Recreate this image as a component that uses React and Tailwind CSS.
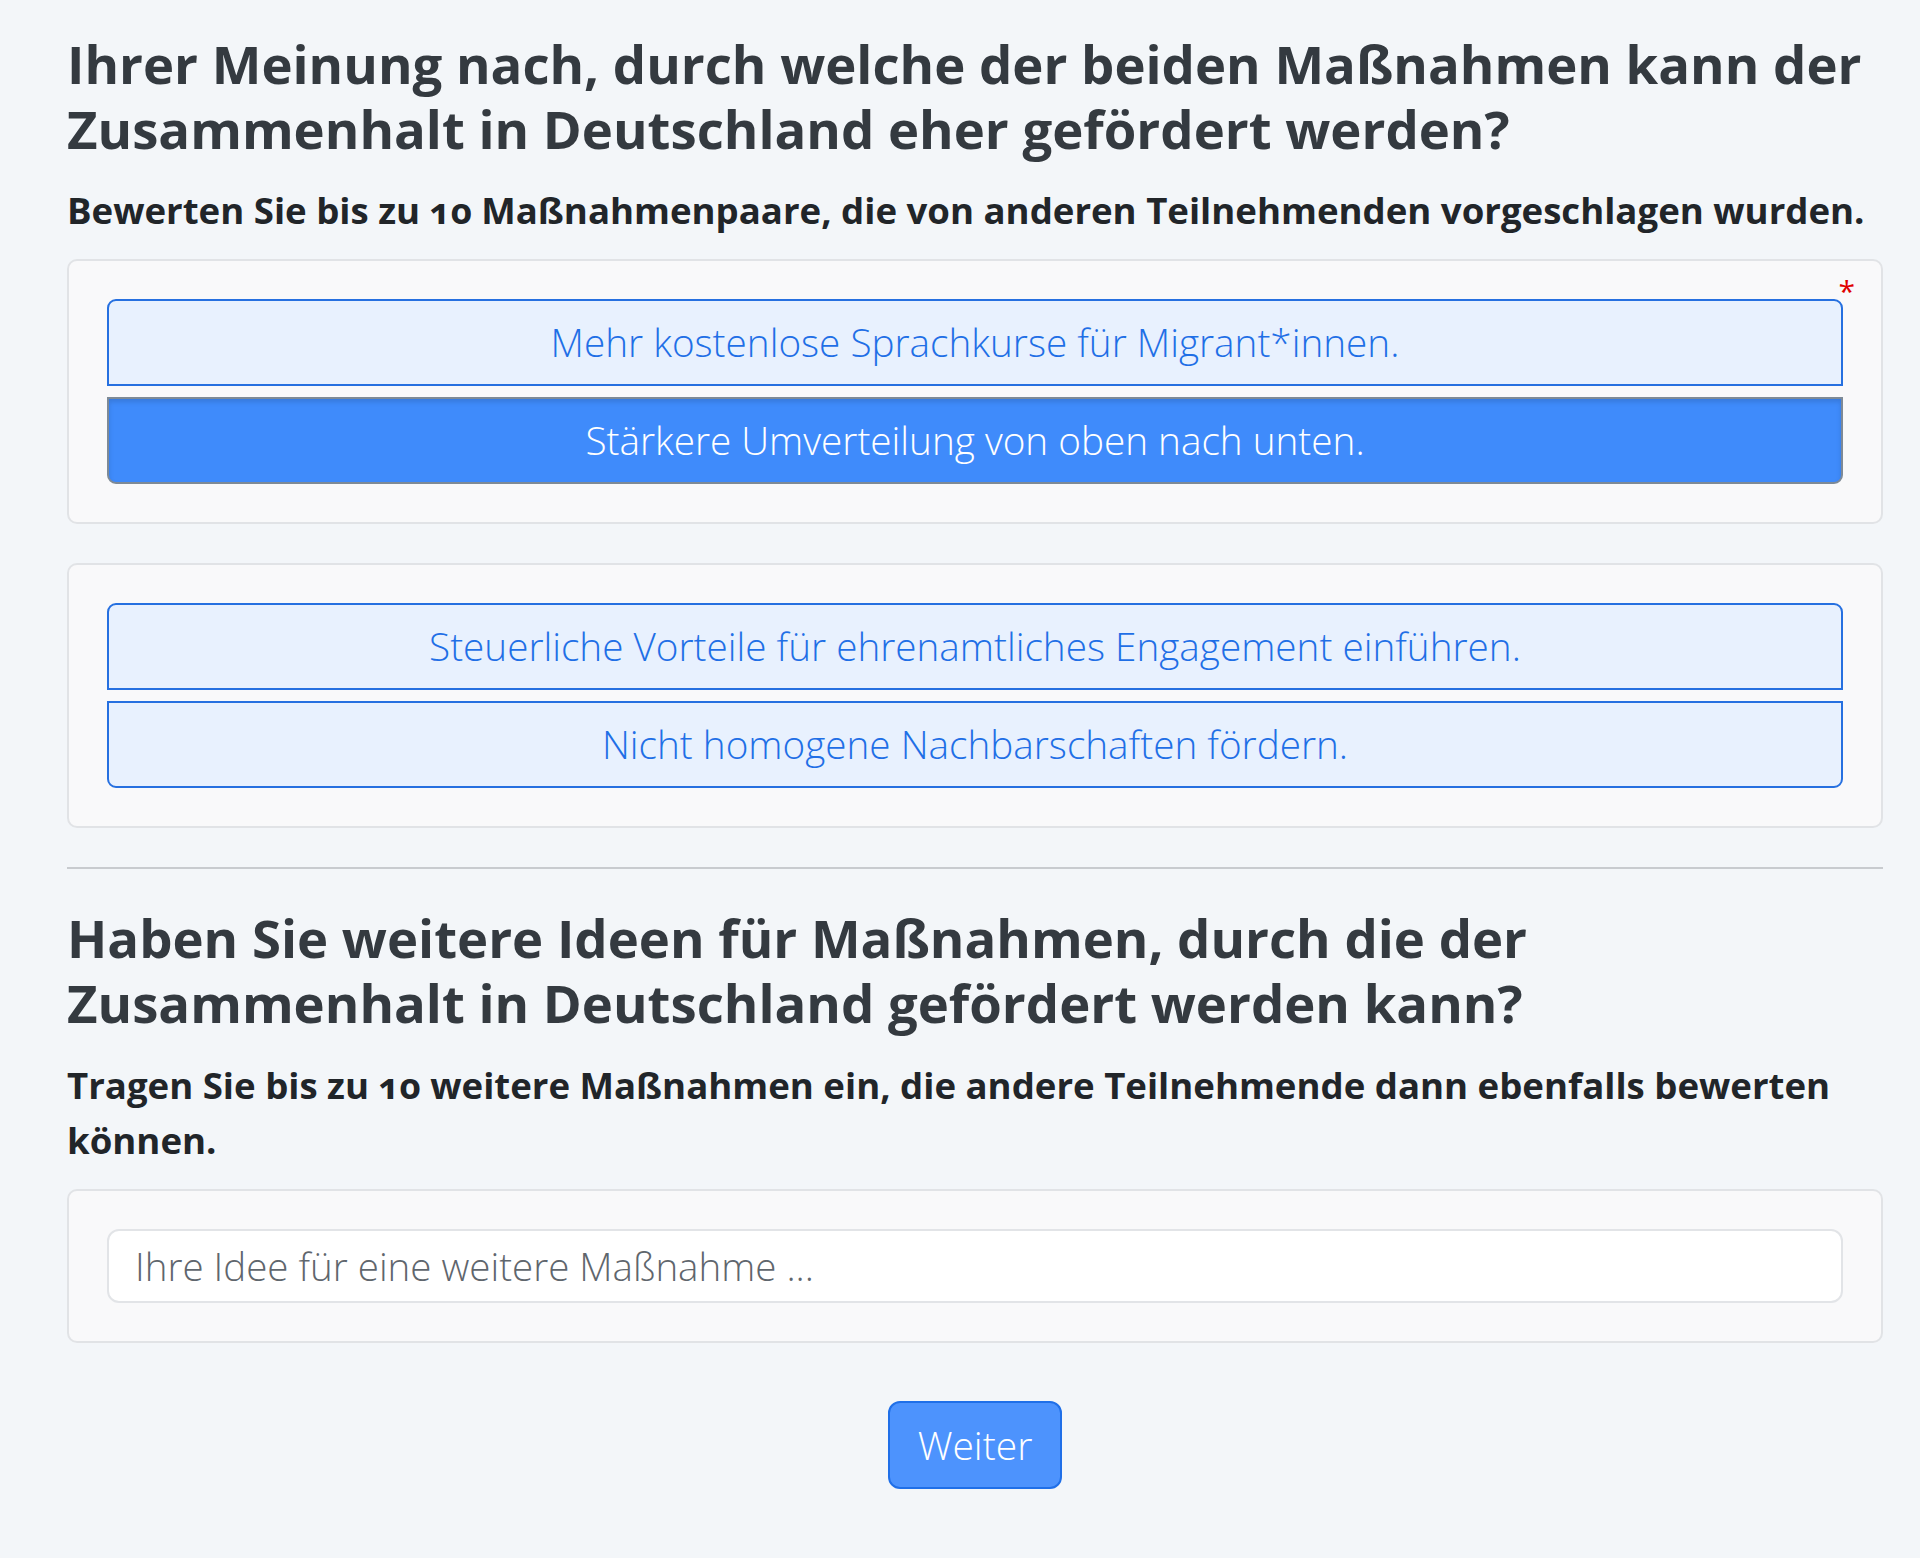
import { useState } from "react";

const pairs = [
  ["Mehr kostenlose Sprachkurse für Migrant*innen.", "Stärkere Umverteilung von oben nach unten."],
  ["Steuerliche Vorteile für ehrenamtliches Engagement einführen.", "Nicht homogene Nachbarschaften fördern."],
];

function Option({ label, selected, first, onClick }) {
  const shape = first ? "rounded-t-[9px]" : "rounded-b-[9px]";
  const look = selected
    ? "bg-[#3f8bfb] border-[#7e8a96] text-white shadow-[inset_0_3px_5px_rgba(0,0,0,0.13)]"
    : "bg-[#e8f1fe] border-[#2670e0] text-[#1f6fe6]";
  return (
    <button
      onClick={onClick}
      className={`h-[87px] w-full border-2 ${shape} ${look} flex items-center justify-center text-[38.7px] font-light leading-[1.5]`}
    >
      {label}
    </button>
  );
}

export default function App() {
  const [choice, setChoice] = useState({ 0: 1 });
  const [idea, setIdea] = useState("");

  return (
    <div className="min-h-screen bg-[#f3f6f9] pl-[67px] pr-[37px] pt-[31px] pb-[69px] font-['Open_Sans',sans-serif]">
      <h2 className="text-[52.7px] leading-[65px] font-bold text-[#343a40]">
        Ihrer Meinung nach, durch welche der beiden Maßnahmen kann der Zusammenhalt in Deutschland eher gefördert werden?
      </h2>
      <p className="mt-[22px] text-[36.6px] leading-[55px] font-bold text-[#212529] oldstyle-nums">
        Bewerten Sie bis zu 10 Maßnahmenpaare, die von anderen Teilnehmenden vorgeschlagen wurden.
      </p>

      {pairs.map((pair, i) => (
        <div
          key={i}
          className={`${i === 0 ? "mt-[21px]" : "mt-[39px]"} rounded-[10px] border-2 border-[#e1e3e6] bg-[#f9f9fa] p-[38px]`}
        >
          <div className="relative flex flex-col gap-[11px]">
            {i === 0 && (
              <span className="absolute right-[-12px] top-[-23px] text-[30px] leading-none text-[#e00000]">*</span>
            )}
            {pair.map((label, j) => (
              <Option
                key={j}
                label={label}
                first={j === 0}
                selected={choice[i] === j}
                onClick={() => setChoice({ ...choice, [i]: j })}
              />
            ))}
          </div>
        </div>
      ))}

      <div className="mt-[39px] h-[2px] bg-[#c8cbcf]" />

      <h2 className="mt-[36px] text-[52.7px] leading-[65px] font-bold text-[#343a40]">
        Haben Sie weitere Ideen für Maßnahmen, durch die der Zusammenhalt in Deutschland gefördert werden kann?
      </h2>
      <p className="mt-[23px] text-[36.6px] leading-[55px] font-bold text-[#212529] oldstyle-nums">
        Tragen Sie bis zu 10 weitere Maßnahmen ein, die andere Teilnehmende dann ebenfalls bewerten können.
      </p>

      <div className="mt-[21px] rounded-[10px] border-2 border-[#e1e3e6] bg-[#f9f9fa] p-[38px]">
        <input
          value={idea}
          onChange={(e) => setIdea(e.target.value)}
          placeholder="Ihre Idee für eine weitere Maßnahme ..."
          className="h-[74px] w-full rounded-[12px] border-2 border-[#e2e4e7] bg-white px-[26px] text-[38.5px] font-light text-[#343a40] placeholder:text-[#5f666d] focus:outline-none"
        />
      </div>

      <div className="mt-[58px] flex justify-center">
        <button className="h-[88px] w-[174px] rounded-[12px] border-2 border-[#1f6fe8] bg-[#4d93fd] text-[39px] font-light text-white">
          Weiter
        </button>
      </div>
    </div>
  );
}
